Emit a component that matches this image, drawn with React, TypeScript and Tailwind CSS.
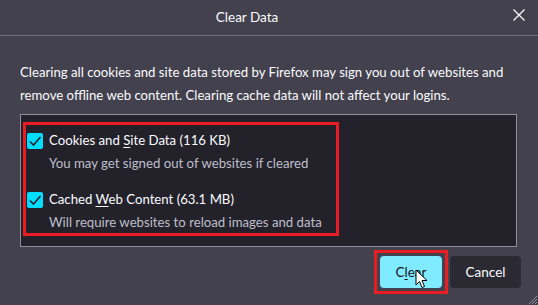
import React from 'react'

const font = { fontFamily: 'Lato, "Noto Sans", sans-serif' }

function Check() {
  return (
    <div className="w-[16px] h-[16px] rounded-[2px] bg-[#00ddff] flex items-center justify-center shrink-0">
      <svg width="14" height="14" viewBox="0 0 14 14" fill="none">
        <path d="M2 7.5 L5.5 11 L12.5 3" stroke="#23222b" strokeWidth="1.6" />
      </svg>
    </div>
  )
}

function Option({ label, under, rest, desc }: { label: string; under: string; rest: string; desc: string }) {
  return (
    <div className="flex flex-col">
      <div className="flex items-center gap-[6px] h-[20px]">
        <Check />
        <span className="text-[13.2px] text-[#fbfbfe] whitespace-nowrap">
          {label}
          <span className="underline underline-offset-2">{under}</span>
          {rest}
        </span>
      </div>
      <div className="pl-[22px] text-[13.2px] text-[#bfbfc9] mt-[2px] leading-[20px] whitespace-nowrap">{desc}</div>
    </div>
  )
}

export default function App() {
  return (
    <div className="w-[538px] h-[305px] bg-[#42414d] text-[#fbfbfe] relative overflow-hidden" style={font}>
      <div className="h-[36px] border-b border-[#6e6d78] flex items-center justify-center relative pr-[44px]">
        <span className="text-[13.5px]">Clear Data</span>
        <svg className="absolute right-[13px] top-[9px]" width="12" height="12" viewBox="0 0 12 12">
          <path d="M0.5 0.5 L11.5 11.5 M11.5 0.5 L0.5 11.5" stroke="#fbfbfe" strokeWidth="1.3" />
        </svg>
      </div>
      <div className="px-[20px] pt-[25px]">
        <p className="text-[13.2px] leading-[23px] whitespace-nowrap">
          Clearing all cookies and site data stored by Firefox may sign you out of websites and
          <br />
          remove offline web content. Clearing cache data will not affect your logins.
        </p>
        <div className="mt-[7px] w-[497px] h-[133px] border border-[#8f8f9d] bg-[#23222b] pl-[2px] pt-[7px]">
          <div className="w-[316px] h-[114px] border-[3px] border-[#ea1c24] pl-[1px] pt-[6px] flex flex-col gap-[17px]">
            <Option label="Cookies and " under="S" rest="ite Data (116 KB)" desc="You may get signed out of websites if cleared" />
            <Option label="Cached " under="W" rest="eb Content (63.1 MB)" desc="Will require websites to reload images and data" />
          </div>
        </div>
        <div className="flex justify-end items-center mt-[3px] gap-[2px] mr-[-3px]">
          <div className="border-[3px] border-[#ea1c24] p-[3px] relative">
            <button className="w-[62px] h-[32px] rounded-[4px] bg-[#80ebff] text-[#15141a] text-[13.5px]">
              C<span className="underline underline-offset-2">l</span>ear
            </button>
            <svg className="absolute left-[38px] top-[16px]" width="14" height="21" viewBox="0 0 14 21">
              <path d="M1 1 L1 16 L4.5 12.5 L7 18.5 L9.5 17.5 L7 11.5 L12 11.5 Z" fill="#ffffff" stroke="#000000" strokeWidth="1" strokeLinejoin="round" />
            </svg>
          </div>
          <button className="w-[71px] h-[32px] rounded-[4px] bg-[#2b2a33] text-[#fbfbfe] text-[13.5px]">Cancel</button>
        </div>
      </div>
      <svg className="absolute right-0 bottom-0" width="12" height="12" viewBox="0 0 12 12">
        <path d="M11 3 L3 11 M11 6 L6 11 M11 9 L9 11" stroke="#8f8f9d" strokeWidth="1" />
      </svg>
    </div>
  )
}
